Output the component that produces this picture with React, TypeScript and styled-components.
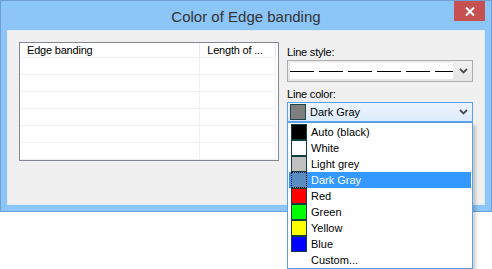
import styled, { createGlobalStyle } from "styled-components";

const GlobalStyle = createGlobalStyle`
  html, body {
    margin: 0;
    padding: 0;
    background: #ffffff;
  }
  body {
    font-family: "Liberation Sans", Arial, sans-serif;
    width: 492px;
    height: 269px;
    overflow: hidden;
  }
`;

const Window = styled.div`
  width: 492px;
  height: 212px;
  box-sizing: border-box;
  background: #8cc5f7;
  border: 1px solid #6d9fd6;
  display: flex;
  flex-direction: column;
`;

const TitleBar = styled.div`
  height: 29px;
  position: relative;
  display: flex;
  align-items: center;
  justify-content: center;
`;

const Title = styled.div`
  font-size: 15px;
  color: #333333;
  padding-top: 1px;
`;

const CloseButton = styled.div`
  position: absolute;
  right: 6px;
  top: 0;
  width: 31px;
  height: 20px;
  background: #c75050;
  display: flex;
  align-items: center;
  justify-content: center;
`;

const Client = styled.div`
  flex: 1;
  margin: 0 6px 6px 6px;
  background: #f0f0f0;
  border: 1px solid #e2e9f1;
  display: flex;
  gap: 8px;
  padding: 11px 10px 0 11px;
`;

const Table = styled.div`
  width: 260px;
  height: 119px;
  box-sizing: border-box;
  border: 1px solid #828790;
  background: #ffffff;
  display: flex;
  flex-direction: column;
  overflow: hidden;
`;

const HeaderRow = styled.div`
  display: flex;
  height: 24px;
  border-bottom: 1px solid #eef2f7;
  margin-right: 2px;
`;

const HeaderCell = styled.div<{ $w: number }>`
  width: ${(p) => p.$w}px;
  box-sizing: border-box;
  border-right: 1px solid #e5e9ee;
  font-size: 11px;
  letter-spacing: -0.2px;
  color: #000000;
  padding-left: 7px;
  display: flex;
  align-items: center;
  white-space: nowrap;
  overflow: hidden;
`;

const BodyRow = styled.div`
  display: flex;
  height: 17px;
  flex: none;
  margin-right: 2px;
`;

const BodyCell = styled.div<{ $w: number }>`
  width: ${(p) => p.$w}px;
  box-sizing: border-box;
  border-right: 1px solid #f0f0f0;
  border-bottom: 1px solid #f0f0f0;
`;

const Side = styled.div`
  width: 186px;
  display: flex;
  flex-direction: column;
`;

const Label = styled.div`
  font-size: 11px;
  letter-spacing: -0.2px;
  color: #000000;
  height: 17px;
  display: flex;
  align-items: center;
  padding-top: 1px;
`;

const Combo = styled.div<{ $focused?: boolean }>`
  position: relative;
  height: ${(p) => (p.$focused ? 20 : 22)}px;
  box-sizing: border-box;
  border: 1px solid ${(p) => (p.$focused ? "#5aa0e6" : "#acacac")};
  background: ${(p) =>
    p.$focused
      ? "linear-gradient(#ecf4fc, #dcecfc)"
      : "linear-gradient(#f0f0f0, #e5e5e5)"};
  display: flex;
  align-items: center;
  padding: 0 0 0 2px;
  margin-bottom: ${(p) => (p.$focused ? 0 : 2)}px;
`;

const StyleField = styled.div`
  width: 163px;
  height: 16px;
  background: #ffffff;
  display: flex;
  align-items: center;
  overflow: hidden;
`;

const DashLine = styled.div`
  width: 100%;
  height: 1px;
  background: repeating-linear-gradient(
    90deg,
    #000000 0,
    #000000 24px,
    transparent 24px,
    transparent 29px
  );
`;

const Arrow = styled.div`
  position: absolute;
  right: 4px;
  top: 50%;
  transform: translateY(-50%);
  display: flex;
`;

const ComboValue = styled.div`
  display: flex;
  align-items: center;
  gap: 4px;
  font-size: 11px;
  color: #000000;
`;

const Swatch = styled.div<{ $c: string }>`
  width: 16px;
  height: 16px;
  box-sizing: border-box;
  border: 1px solid #1b4747;
  background: ${(p) => p.$c};
  flex: none;
`;

const DropList = styled.div`
  position: absolute;
  left: -1px;
  top: 19px;
  width: 186px;
  box-sizing: border-box;
  border: 1px solid #5aa0e6;
  background: #ffffff;
  padding: 1px 0 0 3px;
  box-shadow: 3px 3px 3px rgba(0, 0, 0, 0.18);
  z-index: 5;
`;

const Item = styled.div<{ $sel?: boolean }>`
  height: 16px;
  display: flex;
  align-items: center;
  gap: 4px;
  font-size: 11px;
  margin-left: -2px;
  padding-left: 2px;
  margin-right: 1px;
  color: ${(p) => (p.$sel ? "#ffffff" : "#000000")};
  background: ${(p) => (p.$sel ? "#3399ff" : "transparent")};
`;

const ItemSwatch = styled.div<{ $c?: string; $sel?: boolean }>`
  width: 16px;
  height: 16px;
  box-sizing: border-box;
  flex: none;
  border: 1px ${(p) => (p.$sel ? "dotted #000000" : "solid #0f3f3f")};
  background: ${(p) =>
    p.$sel
      ? "repeating-conic-gradient(#808080 0 25%, #3399ff 0 50%) 0 0 / 2px 2px"
      : p.$c || "transparent"};
  visibility: ${(p) => (p.$c || p.$sel ? "visible" : "hidden")};
`;

const colors = [
  { name: "Auto (black)", c: "#000000" },
  { name: "White", c: "#ffffff" },
  { name: "Light grey", c: "#c0c0c0" },
  { name: "Dark Gray", c: "#808080", sel: true },
  { name: "Red", c: "#ff0000" },
  { name: "Green", c: "#00ff00" },
  { name: "Yellow", c: "#ffff00" },
  { name: "Blue", c: "#0000ff" },
  { name: "Custom...", c: "" },
];

function Chevron() {
  return (
    <svg width="9" height="6" viewBox="0 0 9 6">
      <polyline
        points="1,1 4.5,4.5 8,1"
        fill="none"
        stroke="#4d4d4d"
        strokeWidth="1.8"
      />
    </svg>
  );
}

export default function App() {
  const rows = [0, 1, 2, 3, 4, 5];
  return (
    <>
      <GlobalStyle />
      <Window>
        <TitleBar>
          <Title>Color of Edge banding</Title>
          <CloseButton>
            <svg width="10" height="9" viewBox="0 0 10 9">
              <path d="M1 0.5 L9 8.5 M9 0.5 L1 8.5" stroke="#ffffff" strokeWidth="2" />
            </svg>
          </CloseButton>
        </TitleBar>
        <Client>
          <Table>
            <HeaderRow>
              <HeaderCell $w={181}>Edge banding</HeaderCell>
              <HeaderCell $w={76}>Length of ...</HeaderCell>
            </HeaderRow>
            {rows.map((r) => (
              <BodyRow key={r}>
                <BodyCell $w={181} />
                <BodyCell $w={76} />
              </BodyRow>
            ))}
          </Table>
          <Side>
            <Label>Line style:</Label>
            <Combo>
              <StyleField>
                <DashLine />
              </StyleField>
              <Arrow>
                <Chevron />
              </Arrow>
            </Combo>
            <Label>Line color:</Label>
            <Combo $focused>
              <ComboValue>
                <Swatch $c="#7f7f7f" />
                Dark Gray
              </ComboValue>
              <Arrow>
                <Chevron />
              </Arrow>
              <DropList>
                {colors.map((col) => (
                  <Item key={col.name} $sel={col.sel}>
                    <ItemSwatch $c={col.c} $sel={col.sel} />
                    {col.name}
                  </Item>
                ))}
              </DropList>
            </Combo>
          </Side>
        </Client>
      </Window>
    </>
  );
}
